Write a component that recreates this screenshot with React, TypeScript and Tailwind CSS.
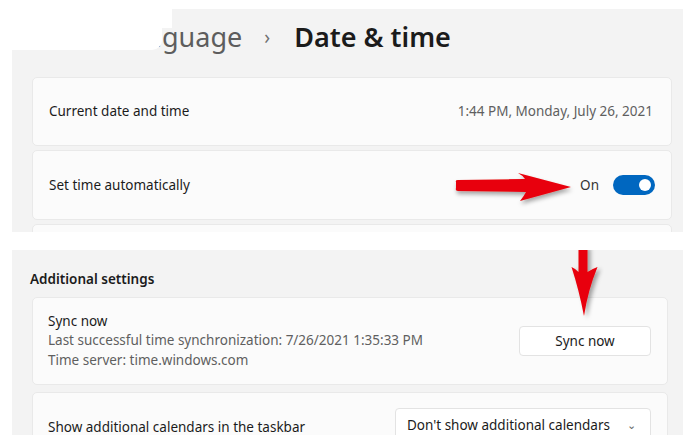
import React from "react";

const RightArrow = () => (
  <svg width="130" height="42" viewBox="0 0 130 42" className="absolute left-[418px] top-[16px]">
    <defs>
      <filter id="shadowR" x="-20%" y="-40%" width="140%" height="180%">
        <feDropShadow dx="1" dy="3" stdDeviation="2" floodColor="#000" floodOpacity="0.35" />
      </filter>
    </defs>
    <path
      d="M5 15 Q4 13 7 13 L74 12 Q71 8 67 6 L120 20 L69 34 Q73 29 75 25 L7 24 Q4 24 5 21 Z"
      fill="#e8000a"
      filter="url(#shadowR)"
    />
  </svg>
);

const DownArrow = () => (
  <svg width="40" height="74" viewBox="0 0 40 74" className="absolute left-[556px] top-0">
    <defs>
      <filter id="shadowD" x="-40%" y="-20%" width="180%" height="140%">
        <feDropShadow dx="3" dy="2" stdDeviation="2" floodColor="#000" floodOpacity="0.35" />
      </filter>
    </defs>
    <path
      d="M10.5 -4 L19.5 -4 L19.5 22 Q24 19 29.5 17 Q20 40 16 66 Q11 40 3.5 17 Q8 19 10.5 22 Z"
      fill="#e8000a"
      filter="url(#shadowD)"
    />
  </svg>
);

const Card: React.FC<{ className?: string; children?: React.ReactNode }> = ({ className, children }) => (
  <div className={`bg-[#fbfbfb] border border-[#e9e9e9] rounded-[5px] ${className ?? ""}`}>{children}</div>
);

export default function App() {
  return (
    <div
      className="relative w-[695px] h-[435px] bg-white overflow-hidden text-[13.5px] text-[#1b1b1b]"
      style={{ fontFamily: '"Noto Sans", "Open Sans", sans-serif' }}
    >
      {/* top section */}
      <div className="mt-[9px] ml-[12px] w-[671px] h-[223px] bg-[#f3f3f3] overflow-hidden">
        <div className="h-[68px] pt-[12px] pl-[104px] flex items-start">
          <span className="text-[27px] leading-[32px] text-[#5d5d5d]">Language</span>
          <span className="text-[19px] leading-[32px] text-[#707070] ml-[22px] mr-[24px]">›</span>
          <span className="text-[27px] leading-[32px] font-semibold text-[#1b1b1b]">Date &amp; time</span>
        </div>
        <div className="ml-[20px] mr-[11px] flex flex-col gap-[4px]">
          <Card className="h-[69px] flex items-center justify-between pl-[16px] pr-[18px]">
            <span>Current date and time</span>
            <span className="text-[#5f5f5f]">1:44 PM, Monday, July 26, 2021</span>
          </Card>
          <Card className="relative h-[70px] flex items-center justify-between pl-[16px] pr-[16px]">
            <span>Set time automatically</span>
            <div className="flex items-center gap-[14px]">
              <span className="text-[#333]">On</span>
              <div className="w-[42px] h-[20px] rounded-full bg-[#0067c0] flex items-center justify-end pr-[4px]">
                <div className="w-[12px] h-[12px] rounded-full bg-white" />
              </div>
            </div>
            <RightArrow />
          </Card>
          <Card className="h-[70px]" />
        </div>
      </div>

      {/* white overlay covering the header start */}
      <div className="absolute left-0 top-0 w-[172px] h-[28px] bg-white" />
      <div className="absolute left-0 top-0 w-[162px] h-[50px] bg-white rounded-br-[10px]" />

      {/* bottom section */}
      <div className="relative mt-[18px] ml-[12px] w-[671px] h-[185px] bg-[#f3f3f3] overflow-hidden pt-[19px]">
        <div className="pl-[18px] leading-[20px] font-semibold">Additional settings</div>
        <div className="mt-[8px] ml-[20px] mr-[15px] flex flex-col gap-[7px]">
          <Card className="h-[88px] flex items-center justify-between pl-[15px] pr-[16px]">
            <div className="flex flex-col leading-[19.5px]">
              <span>Sync now</span>
              <span className="text-[#5f5f5f]">Last successful time synchronization: 7/26/2021 1:35:33 PM</span>
              <span className="text-[#5f5f5f]">Time server: time.windows.com</span>
            </div>
            <button className="w-[132px] h-[30px] bg-white border border-[#e3e3e3] rounded-[4px] text-[#1b1b1b]">
              Sync now
            </button>
          </Card>
          <Card className="h-[70px] flex items-start justify-between pl-[15px] pr-[16px] pt-[15px]">
            <span className="mt-[9px]">Show additional calendars in the taskbar</span>
            <div className="w-[256px] h-[34px] bg-white border border-[#e3e3e3] rounded-[4px] flex items-center justify-between pl-[11px] pr-[14px]">
              <span>Don&apos;t show additional calendars</span>
              <span className="text-[#666] text-[11px]">⌄</span>
            </div>
          </Card>
        </div>
        <DownArrow />
      </div>
    </div>
  );
}
